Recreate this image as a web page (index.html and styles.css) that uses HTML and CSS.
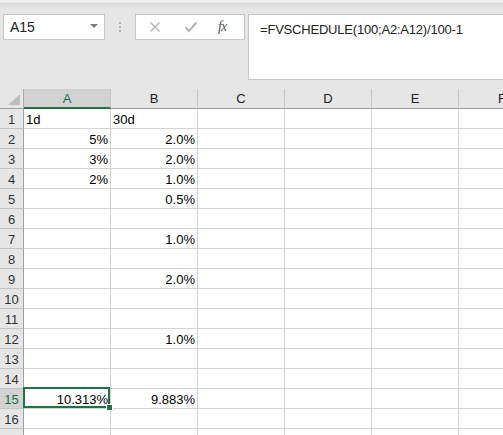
FILE: index.html
```html
<!DOCTYPE html>
<html>
<head>
<meta charset="utf-8">
<link rel="stylesheet" href="styles.css">
</head>
<body>
<div class="app">
  <div class="topbar"></div>
  <div class="formula-row">
    <div class="namebox">
      <span class="name">A15</span>
      <span class="caret"></span>
    </div>
    <div class="grip"><i></i><i></i><i></i></div>
    <div class="fxbox">
      <svg class="ico" width="12" height="12" viewBox="0 0 12 12"><path d="M1.5 1.5 L10.5 10.5 M10.5 1.5 L1.5 10.5" stroke="#b4b4b4" stroke-width="1.4" fill="none"/></svg>
      <svg class="ico" width="14" height="12" viewBox="0 0 14 12"><path d="M1.5 6.5 L5 10 L12.5 1.5" stroke="#b4b4b4" stroke-width="2" fill="none"/></svg>
      <span class="fx">fx</span>
    </div>
    <div class="formula">=FVSCHEDULE(100;A2:A12)/100-1</div>
  </div>
  <div class="sheet">
    <div class="corner"><span class="tri"></span></div>
    <div class="colh sel">A</div>
    <div class="colh">B</div>
    <div class="colh">C</div>
    <div class="colh">D</div>
    <div class="colh">E</div>
    <div class="colh">F</div>

    <div class="rowh">1</div><div class="c l">1d</div><div class="c l">30d</div><div class="c"></div><div class="c"></div><div class="c"></div><div class="c"></div>
    <div class="rowh">2</div><div class="c">5%</div><div class="c">2.0%</div><div class="c"></div><div class="c"></div><div class="c"></div><div class="c"></div>
    <div class="rowh">3</div><div class="c">3%</div><div class="c">2.0%</div><div class="c"></div><div class="c"></div><div class="c"></div><div class="c"></div>
    <div class="rowh">4</div><div class="c">2%</div><div class="c">1.0%</div><div class="c"></div><div class="c"></div><div class="c"></div><div class="c"></div>
    <div class="rowh">5</div><div class="c"></div><div class="c">0.5%</div><div class="c"></div><div class="c"></div><div class="c"></div><div class="c"></div>
    <div class="rowh">6</div><div class="c"></div><div class="c"></div><div class="c"></div><div class="c"></div><div class="c"></div><div class="c"></div>
    <div class="rowh">7</div><div class="c"></div><div class="c">1.0%</div><div class="c"></div><div class="c"></div><div class="c"></div><div class="c"></div>
    <div class="rowh">8</div><div class="c"></div><div class="c"></div><div class="c"></div><div class="c"></div><div class="c"></div><div class="c"></div>
    <div class="rowh">9</div><div class="c"></div><div class="c">2.0%</div><div class="c"></div><div class="c"></div><div class="c"></div><div class="c"></div>
    <div class="rowh">10</div><div class="c"></div><div class="c"></div><div class="c"></div><div class="c"></div><div class="c"></div><div class="c"></div>
    <div class="rowh">11</div><div class="c"></div><div class="c"></div><div class="c"></div><div class="c"></div><div class="c"></div><div class="c"></div>
    <div class="rowh">12</div><div class="c"></div><div class="c">1.0%</div><div class="c"></div><div class="c"></div><div class="c"></div><div class="c"></div>
    <div class="rowh">13</div><div class="c"></div><div class="c"></div><div class="c"></div><div class="c"></div><div class="c"></div><div class="c"></div>
    <div class="rowh">14</div><div class="c"></div><div class="c"></div><div class="c"></div><div class="c"></div><div class="c"></div><div class="c"></div>
    <div class="rowh sel">15</div><div class="c active">10.313%<span class="selbox"></span><span class="handle"></span></div><div class="c">9.883%</div><div class="c"></div><div class="c"></div><div class="c"></div><div class="c"></div>
    <div class="rowh">16</div><div class="c"></div><div class="c"></div><div class="c"></div><div class="c"></div><div class="c"></div><div class="c"></div>
    <div class="rowh"></div><div class="c"></div><div class="c"></div><div class="c"></div><div class="c"></div><div class="c"></div><div class="c"></div>
  </div>
</div>
</body>
</html>
```
FILE: styles.css
```css
html, body {
  margin: 0;
  padding: 0;
  height: 100%;
  overflow: hidden;
}
body {
  background: #e6e6e6;
  font-family: "Liberation Sans", Arial, sans-serif;
  font-size: 13px;
  color: #000;
}
.app {
  width: 503px;
  height: 435px;
  overflow: hidden;
}
.topbar {
  height: 9px;
  background: linear-gradient(#efefef 0, #efefef 2px, #d9d9d9 3px, #e6e6e6 9px);
}
.formula-row {
  display: flex;
  align-items: flex-start;
  margin-top: 5px;
  height: 65px;
}
.namebox {
  box-sizing: border-box;
  margin-left: 3px;
  width: 102px;
  height: 26px;
  background: #fff;
  border: 1px solid #c6c6c6;
  display: flex;
  align-items: center;
  justify-content: space-between;
  padding: 0 6px 0 6px;
}
.name {
  font-size: 14px;
  color: #222;
}
.caret {
  width: 0;
  height: 0;
  border-left: 4px solid transparent;
  border-right: 4px solid transparent;
  border-top: 4px solid #7a7a7a;
  margin-top: -2px;
}
.grip {
  width: 30px;
  height: 26px;
  display: flex;
  flex-direction: column;
  align-items: center;
  justify-content: center;
  gap: 2px;
}
.grip i {
  display: block;
  width: 2px;
  height: 2px;
  background: #b0b0b0;
}
.fxbox {
  box-sizing: border-box;
  width: 110px;
  height: 26px;
  background: #fff;
  border: 1px solid #c6c6c6;
  display: flex;
  align-items: center;
  padding-left: 13px;
}
.fxbox .ico:first-child {
  margin-right: 23px;
}
.fxbox .ico:nth-child(2) {
  margin-right: 20px;
}
.fx {
  font-family: "Liberation Serif", "Times New Roman", serif;
  font-style: italic;
  font-size: 14px;
  color: #555;
  letter-spacing: -1px;
}
.formula {
  box-sizing: border-box;
  margin-left: 3px;
  flex: 1;
  height: 66px;
  margin-right: -4px;
  background: #fff;
  border: 1px solid #c6c6c6;
  padding: 7px 0 0 11px;
  font-size: 13px;
  letter-spacing: -0.2px;
  color: #222;
}
.sheet {
  margin-top: 10px;
  display: grid;
  grid-template-columns: 24px repeat(6, 87px);
  grid-auto-rows: 20px;
}
.corner, .colh, .rowh, .c {
  box-sizing: border-box;
}
.corner {
  position: relative;
  border-right: 1px solid #ababab;
  border-bottom: 1px solid #9e9e9e;
}
.tri {
  position: absolute;
  right: 3px;
  bottom: 3px;
  width: 0;
  height: 0;
  border-left: 12px solid transparent;
  border-bottom: 11px solid #bdbdbd;
}
.colh {
  border-right: 1px solid #c4c4c4;
  border-bottom: 1px solid #9e9e9e;
  display: flex;
  align-items: center;
  justify-content: center;
  font-size: 13px;
  color: #222;
}
.colh.sel {
  background: #d2d2d2;
  border-bottom: 2px solid #217346;
  color: #1e6e46;
}
.rowh {
  border-right: 1px solid #9e9e9e;
  border-bottom: 1px solid #c4c4c4;
  display: flex;
  align-items: center;
  justify-content: center;
  font-size: 13px;
  color: #333;
  padding-top: 1px;
}
.rowh.sel {
  background: #d2d2d2;
  color: #1e6e46;
}
.c {
  position: relative;
  background: #fff;
  border-right: 1px solid #d4d4d4;
  border-bottom: 1px solid #d4d4d4;
  text-align: right;
  padding: 3px 2px 0 2px;
  font-size: 13px;
  line-height: 16px;
  white-space: nowrap;
}
.c.l {
  text-align: left;
}
.selbox {
  position: absolute;
  left: -1px;
  top: -2px;
  width: 87px;
  height: 21px;
  box-sizing: border-box;
  border: 2px solid #217346;
}
.handle {
  position: absolute;
  right: -3px;
  bottom: -3px;
  width: 5px;
  height: 5px;
  background: #217346;
  border: 1px solid #fff;
  z-index: 2;
}
```
